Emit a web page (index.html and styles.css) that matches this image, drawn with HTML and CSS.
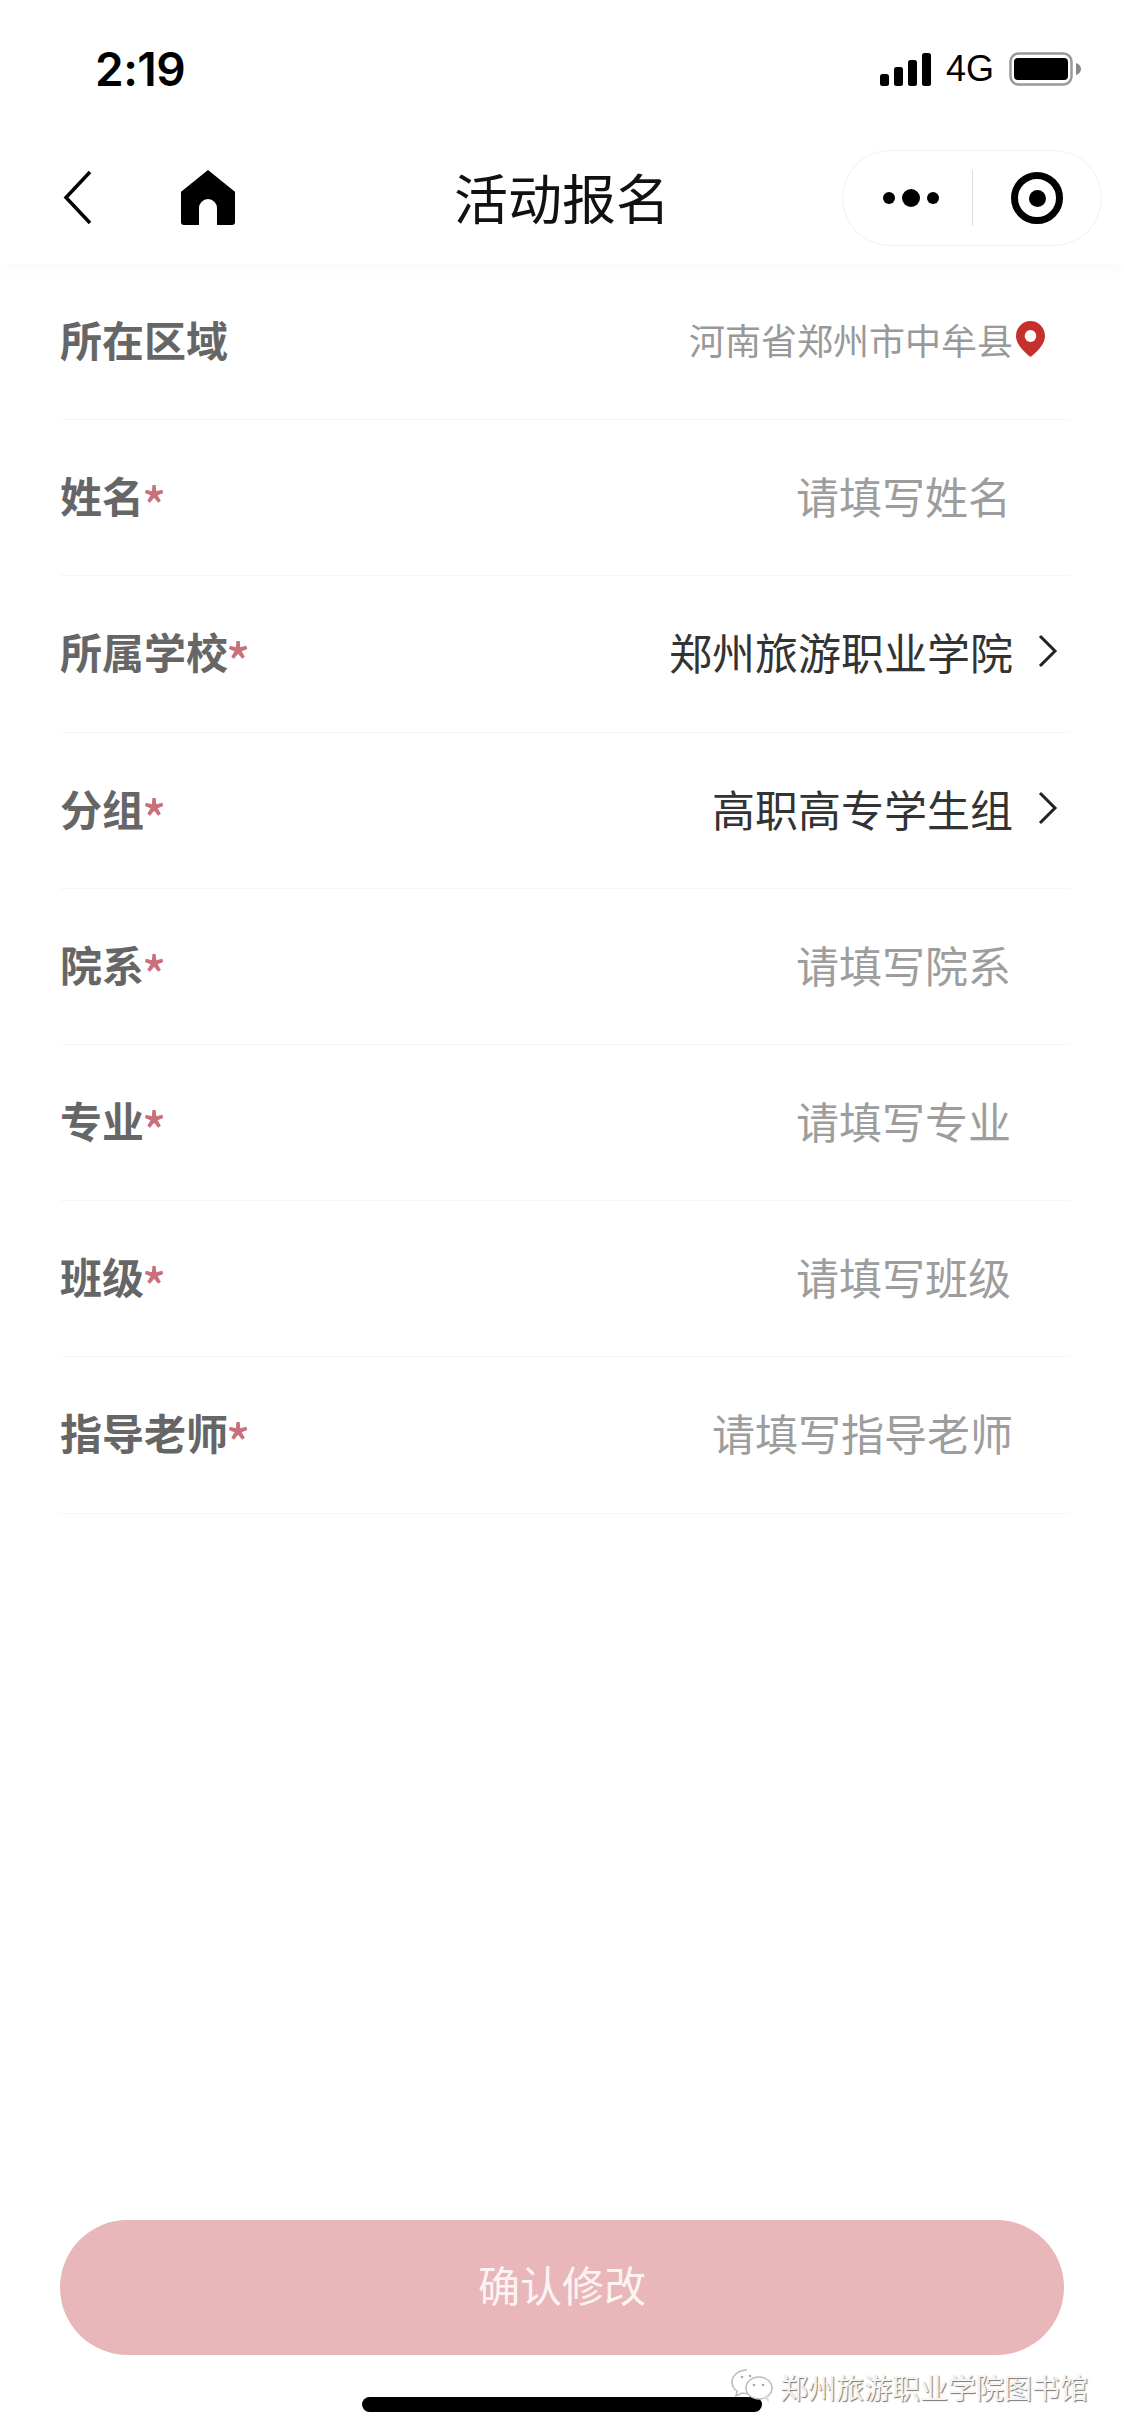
FILE: index.html
```html
<!DOCTYPE html>
<html lang="zh-CN">
<head>
    <meta charset="UTF-8">
    <title>活动报名</title>
    <link rel="stylesheet" href="styles.css">
</head>
<body>
    <div class="page">
        <div class="status-bar">
            <span class="time">2:19</span>
            <div class="status-icons">
                <svg class="signal" width="51" height="33" viewBox="0 0 51 33">
                    <rect x="0" y="21" width="9" height="12" rx="2.5"/>
                    <rect x="14" y="14" width="9" height="19" rx="2.5"/>
                    <rect x="28" y="7" width="9" height="26" rx="2.5"/>
                    <rect x="42" y="0" width="9" height="33" rx="2.5"/>
                </svg>
                <span class="network">4G</span>
                <svg class="battery" width="72" height="34" viewBox="0 0 72 34">
                    <rect x="1.5" y="1.5" width="61" height="31" rx="8" fill="none" stroke="#999" stroke-width="2.5"/>
                    <rect x="5" y="6" width="54" height="22" rx="4"/>
                    <path d="M67 11c3 1 5 3 5 6s-2 5-5 6z" fill="#888"/>
                </svg>
            </div>
        </div>

        <div class="nav-bar">
            <svg class="back" width="30" height="57" viewBox="0 0 30 57">
                <path d="M27 3 3 28.5 27 54" fill="none" stroke="#000" stroke-width="3.5"/>
            </svg>
            <svg class="home" width="54" height="55" viewBox="0 0 54 55">
                <path d="M27 0 53 21a1.5 1.5 0 0 1 1 1.500V52a3 3 0 0 1-3 3H36V38a9 9 0 0 0-18 0v17H3a3 3 0 0 1-3-3V22.500a1.500 1.500 0 0 1 1-1.500z"/>
            </svg>
            <h1 class="nav-title">活动报名</h1>
            <div class="capsule">
                <div class="capsule-more">
                    <i class="dot"></i><i class="dot big"></i><i class="dot"></i>
                </div>
                <div class="capsule-line"></div>
                <div class="capsule-close"><i></i></div>
            </div>
        </div>

        <div class="form">
            <div class="row">
                <span class="label">所在区域</span>
                <div class="value location">
                    河南省郑州市中牟县
                    <svg class="pin" width="29" height="36" viewBox="0 0 30 36" preserveAspectRatio="none">
                        <path d="M15 0a15 15 0 0 1 15 15c0 7-6 14-15 21C6 29 0 22 0 15A15 15 0 0 1 15 0z" fill="#c5302c"/>
                        <circle cx="15" cy="15" r="6" fill="#fff"/>
                    </svg>
                </div>
            </div>
            <div class="row">
                <span class="label">姓名<em>*</em></span>
                <div class="value placeholder">请填写姓名</div>
            </div>
            <div class="row">
                <span class="label">所属学校<em>*</em></span>
                <div class="value picked">
                    郑州旅游职业学院
                    <svg class="chevron" width="22" height="34" viewBox="0 0 22 34">
                        <path d="M3 2l15 15L3 32" fill="none" stroke="#222" stroke-width="3"/>
                    </svg>
                </div>
            </div>
            <div class="row">
                <span class="label">分组<em>*</em></span>
                <div class="value picked">
                    高职高专学生组
                    <svg class="chevron" width="22" height="34" viewBox="0 0 22 34">
                        <path d="M3 2l15 15L3 32" fill="none" stroke="#222" stroke-width="3"/>
                    </svg>
                </div>
            </div>
            <div class="row">
                <span class="label">院系<em>*</em></span>
                <div class="value placeholder">请填写院系</div>
            </div>
            <div class="row">
                <span class="label">专业<em>*</em></span>
                <div class="value placeholder">请填写专业</div>
            </div>
            <div class="row">
                <span class="label">班级<em>*</em></span>
                <div class="value placeholder">请填写班级</div>
            </div>
            <div class="row">
                <span class="label">指导老师<em>*</em></span>
                <div class="value placeholder teacher">请填写指导老师</div>
            </div>
        </div>

        <div class="footer">
            <button class="submit">确认修改</button>
            <div class="home-bar"></div>
        </div>

        <div class="account-mark">
            <svg width="44" height="38" viewBox="0 0 44 38">
                <path d="M17 2C8 2 2 8 2 14c0 4 2 7 5 9l-1 5 6-3c2 .5 3 .6 5 .6" fill="#fff" stroke="#bbb" stroke-width="1.5"/>
                <ellipse cx="29" cy="20" rx="13" ry="11" fill="#fff" stroke="#bbb" stroke-width="1.5"/>
                <path d="M34 29l5 6-1-9z" fill="#ddd"/>
                <circle cx="24" cy="17" r="1.3" fill="#aaa"/>
                <circle cx="33" cy="17" r="1.3" fill="#aaa"/>
                <circle cx="12" cy="9" r="1.3" fill="#aaa"/>
                <circle cx="20" cy="8" r="1.3" fill="#aaa"/>
            </svg>
            <span>郑州旅游职业学院图书馆</span>
        </div>
    </div>
</body>
</html>
```

FILE: styles.css
```css
* { box-sizing: border-box; }

html, body {
    margin: 0;
    padding: 0;
    background: #fff;
}

body {
    font-family: "Noto Sans CJK SC", "Noto Sans", sans-serif;
}

.page {
    position: relative;
    width: 1124px;
    height: 2436px;
    display: flex;
    flex-direction: column;
    overflow: hidden;
}

/* status bar */
.status-bar {
    height: 90px;
    padding: 46px 43px 0 95px;
    display: flex;
    justify-content: space-between;
    align-items: flex-start;
}
.time {
    font-family: Inter, "Liberation Sans", sans-serif;
    font-size: 46px;
    font-weight: 600;
    line-height: 46px;
    letter-spacing: -0.5px;
    color: #000;
}
.status-icons {
    display: flex;
    align-items: center;
    gap: 15px;
    margin-top: 6px;
}
.network {
    font-family: "Liberation Sans", sans-serif;
    font-size: 36px;
    line-height: 34px;
    color: #000;
}

/* nav bar */
.nav-bar {
    height: 174px;
    display: flex;
    align-items: flex-start;
    position: relative;
    box-shadow: 0 6px 14px rgba(0, 0, 0, 0.025);
    z-index: 1;
}
.back {
    margin: 79px 0 0 63px;
}
.home {
    margin: 80px 0 0 88px;
}
.nav-title {
    position: absolute;
    left: 0;
    right: 0;
    top: 69px;
    margin: 0;
    text-align: center;
    font-size: 54px;
    line-height: 76px;
    font-weight: 400;
    color: #111;
}
.capsule {
    position: absolute;
    left: 842px;
    top: 60px;
    width: 260px;
    height: 96px;
    border: 1.5px solid #f1f1f1;
    border-radius: 48px;
    display: flex;
    align-items: center;
    background: #fff;
}
.capsule-more {
    width: 129px;
    padding-left: 7px;
    display: flex;
    align-items: center;
    justify-content: center;
    gap: 7px;
}
.dot {
    width: 12px;
    height: 12px;
    border-radius: 50%;
    background: #000;
}
.dot.big {
    width: 18px;
    height: 18px;
}
.capsule-line {
    width: 1px;
    height: 56px;
    background: #ddd;
}
.capsule-close {
    flex: 1;
    display: flex;
    justify-content: center;
}
.capsule-close i {
    width: 52px;
    height: 52px;
    border: 7px solid #000;
    border-radius: 50%;
    display: flex;
    align-items: center;
    justify-content: center;
}
.capsule-close i::after {
    content: "";
    width: 17px;
    height: 17px;
    border-radius: 50%;
    background: #000;
}

/* form rows */
.form {
    padding: 0 54px 0 60px;
}
.row {
    height: 156.2px;
    padding-bottom: 5px;
    border-bottom: 1.5px solid #f6f6f6;
    display: flex;
    align-items: center;
    justify-content: space-between;
}
.label {
    font-size: 42px;
    font-weight: 700;
    color: #666;
    line-height: 60px;
}
.label em {
    font-style: normal;
    font-weight: 500;
    margin-left: -2px;
    color: #c9707b;
    font-size: 50px;
    line-height: 0;
    vertical-align: -12px;
}
.value {
    display: flex;
    align-items: center;
    font-size: 43px;
    line-height: 60px;
}
.placeholder {
    color: #9d9d9d;
    margin-right: 59px;
}
.placeholder.teacher {
    margin-right: 57px;
}
.picked {
    color: #333;
    gap: 24px;
    margin-right: 11px;
}
.location {
    color: #999;
    font-size: 36px;
    gap: 3px;
    margin-right: 25px;
}

/* footer */
.footer {
    margin-top: auto;
    padding: 0 60px 24px;
    display: flex;
    flex-direction: column;
    align-items: center;
}
.submit {
    width: 1004px;
    height: 135px;
    padding: 0 0 8px;
    border: none;
    border-radius: 68px;
    background: #e9b6ba;
    color: #fdf3f3;
    font-family: inherit;
    font-size: 42px;
}
.home-bar {
    width: 400px;
    height: 15px;
    margin-top: 42px;
    border-radius: 8px;
    background: #000;
}

/* account name stamped in the bottom corner */
.account-mark {
    position: absolute;
    left: 730px;
    top: 2367px;
    display: flex;
    align-items: center;
    gap: 6px;
    font-size: 28px;
    line-height: 40px;
    color: #f4f4f4;
    text-shadow: 1px 1px 1px #777;
    white-space: nowrap;
}
```
